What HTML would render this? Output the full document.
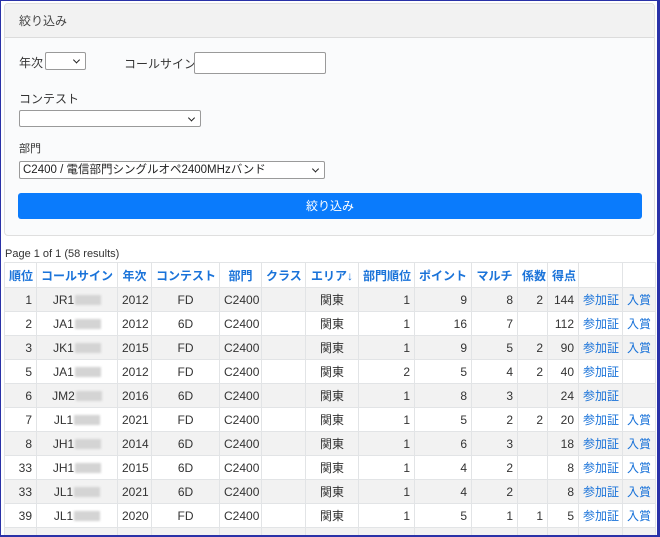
<!DOCTYPE html>
<html><head><meta charset="utf-8">
<style>
*{box-sizing:border-box;margin:0;padding:0}
html,body{width:660px;height:537px;overflow:hidden;background:#fff}
body{font-family:"Liberation Sans","Noto Sans CJK JP",sans-serif;color:#212529;position:relative}
.frame{position:absolute;left:0;top:0;width:660px;height:537px;border:1px solid #2a32a8;border-right:3px solid #2a32a8;border-bottom:2px solid #2a32a8;z-index:5;pointer-events:none}
.card{position:absolute;left:4px;top:3px;width:651px;height:233px;border:1px solid #dfdfdf;border-radius:4px;background:#fafbfc;overflow:hidden}
.ch{height:34px;background:#f2f2f2;border-bottom:1px solid #dcdcdc;font-size:12px;line-height:34px;padding-left:14px;color:#444}
.lbl{position:absolute;font-size:12px;color:#333}
.sel,.inp{position:absolute;background:#fff;border:1px solid #9a9a9a;border-radius:2px;font-size:11.5px;color:#222}
.sel::after{content:"";position:absolute;right:6px;top:50%;width:4px;height:4px;border-right:1.6px solid #222;border-bottom:1.6px solid #222;transform:translateY(-70%) rotate(45deg)}
.btn{position:absolute;left:13px;top:189px;width:624px;height:26px;background:#0a7bfc;border-radius:3px;color:#fff;font-size:12px;text-align:center;line-height:26px}
.pg{position:absolute;left:5px;top:248px;font-size:11px;color:#333}
table{position:absolute;left:4px;top:262px;border-collapse:collapse;table-layout:fixed;width:651px;font-size:12px}
td,th{border:1px solid #e2e4e6;height:24px;padding:0 4px;white-space:nowrap;overflow:hidden}
th{color:#1a73d9;font-weight:bold;text-align:center;height:25px;background:#fff}
tr:nth-child(even) td{background:#f2f2f2}
td{color:#333}
.r{text-align:right}.c{text-align:center}
a{color:#1a73d9;text-decoration:none}
.bl{display:inline-block;width:26px;height:10px;background:#d4d4d4;vertical-align:-1px;filter:blur(1px);margin-left:1px}
</style></head><body>
<div class="frame"></div>
<div class="card">
<div class="ch">絞り込み</div>
<div class="lbl" style="left:14px;top:50px">年次</div>
<div class="sel" style="left:40px;top:48px;width:41px;height:18px"></div>
<div class="lbl" style="left:119px;top:51px">コールサイン</div>
<div class="inp" style="left:189px;top:48px;width:132px;height:22px"></div>
<div class="lbl" style="left:14px;top:86px">コンテスト</div>
<div class="sel" style="left:14px;top:106px;width:182px;height:17px"></div>
<div class="lbl" style="left:14px;top:136px;font-size:11px">部門</div>
<div class="sel" style="left:14px;top:157px;width:306px;height:18px;padding-left:3px;line-height:16px">C2400 / 電信部門シングルオペ2400MHzバンド</div>
<div class="btn">絞り込み</div>
</div>
<div class="pg">Page 1 of 1 (58 results)</div>
<table>
<colgroup><col style="width:32px"><col style="width:81px"><col style="width:34px"><col style="width:68px"><col style="width:42px"><col style="width:44px"><col style="width:53px"><col style="width:56px"><col style="width:57px"><col style="width:46px"><col style="width:30px"><col style="width:31px"><col style="width:44px"><col style="width:33px"></colgroup>
<tr><th>順位</th><th>コールサイン</th><th>年次</th><th>コンテスト</th><th>部門</th><th>クラス</th><th>エリア↓</th><th>部門順位</th><th>ポイント</th><th>マルチ</th><th>係数</th><th>得点</th><th></th><th></th></tr>
<tr><td class="r">1</td><td class="c">JR1<span class="bl"></span></td><td class="c">2012</td><td class="c">FD</td><td class="c">C2400</td><td></td><td class="c">関東</td><td class="r">1</td><td class="r">9</td><td class="r">8</td><td class="r">2</td><td class="r">144</td><td><a>参加証</a></td><td><a>入賞</a></td></tr>
<tr><td class="r">2</td><td class="c">JA1<span class="bl"></span></td><td class="c">2012</td><td class="c">6D</td><td class="c">C2400</td><td></td><td class="c">関東</td><td class="r">1</td><td class="r">16</td><td class="r">7</td><td class="r"></td><td class="r">112</td><td><a>参加証</a></td><td><a>入賞</a></td></tr>
<tr><td class="r">3</td><td class="c">JK1<span class="bl"></span></td><td class="c">2015</td><td class="c">FD</td><td class="c">C2400</td><td></td><td class="c">関東</td><td class="r">1</td><td class="r">9</td><td class="r">5</td><td class="r">2</td><td class="r">90</td><td><a>参加証</a></td><td><a>入賞</a></td></tr>
<tr><td class="r">5</td><td class="c">JA1<span class="bl"></span></td><td class="c">2012</td><td class="c">FD</td><td class="c">C2400</td><td></td><td class="c">関東</td><td class="r">2</td><td class="r">5</td><td class="r">4</td><td class="r">2</td><td class="r">40</td><td><a>参加証</a></td><td></td></tr>
<tr><td class="r">6</td><td class="c">JM2<span class="bl"></span></td><td class="c">2016</td><td class="c">6D</td><td class="c">C2400</td><td></td><td class="c">関東</td><td class="r">1</td><td class="r">8</td><td class="r">3</td><td class="r"></td><td class="r">24</td><td><a>参加証</a></td><td></td></tr>
<tr><td class="r">7</td><td class="c">JL1<span class="bl"></span></td><td class="c">2021</td><td class="c">FD</td><td class="c">C2400</td><td></td><td class="c">関東</td><td class="r">1</td><td class="r">5</td><td class="r">2</td><td class="r">2</td><td class="r">20</td><td><a>参加証</a></td><td><a>入賞</a></td></tr>
<tr><td class="r">8</td><td class="c">JH1<span class="bl"></span></td><td class="c">2014</td><td class="c">6D</td><td class="c">C2400</td><td></td><td class="c">関東</td><td class="r">1</td><td class="r">6</td><td class="r">3</td><td class="r"></td><td class="r">18</td><td><a>参加証</a></td><td><a>入賞</a></td></tr>
<tr><td class="r">33</td><td class="c">JH1<span class="bl"></span></td><td class="c">2015</td><td class="c">6D</td><td class="c">C2400</td><td></td><td class="c">関東</td><td class="r">1</td><td class="r">4</td><td class="r">2</td><td class="r"></td><td class="r">8</td><td><a>参加証</a></td><td><a>入賞</a></td></tr>
<tr><td class="r">33</td><td class="c">JL1<span class="bl"></span></td><td class="c">2021</td><td class="c">6D</td><td class="c">C2400</td><td></td><td class="c">関東</td><td class="r">1</td><td class="r">4</td><td class="r">2</td><td class="r"></td><td class="r">8</td><td><a>参加証</a></td><td><a>入賞</a></td></tr>
<tr><td class="r">39</td><td class="c">JL1<span class="bl"></span></td><td class="c">2020</td><td class="c">FD</td><td class="c">C2400</td><td></td><td class="c">関東</td><td class="r">1</td><td class="r">5</td><td class="r">1</td><td class="r">1</td><td class="r">5</td><td><a>参加証</a></td><td><a>入賞</a></td></tr>
<tr><td></td><td></td><td></td><td></td><td></td><td></td><td></td><td></td><td></td><td></td><td></td><td></td><td></td><td></td></tr>
</table>
</body></html>
